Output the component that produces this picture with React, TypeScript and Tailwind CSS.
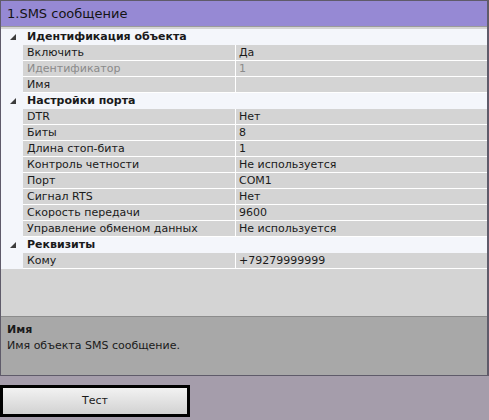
import React from "react";

type Row = { label: string; value: string; disabled?: boolean };
type Section = { title: string; rows: Row[] };

const sections: Section[] = [
  {
    title: "Идентификация объекта",
    rows: [
      { label: "Включить", value: "Да" },
      { label: "Идентификатор", value: "1", disabled: true },
      { label: "Имя", value: "" },
    ],
  },
  {
    title: "Настройки порта",
    rows: [
      { label: "DTR", value: "Нет" },
      { label: "Биты", value: "8" },
      { label: "Длина стоп-бита", value: "1" },
      { label: "Контроль четности", value: "Не используется" },
      { label: "Порт", value: "COM1" },
      { label: "Сигнал RTS", value: "Нет" },
      { label: "Скорость передачи", value: "9600" },
      { label: "Управление обменом данных", value: "Не используется" },
    ],
  },
  {
    title: "Реквизиты",
    rows: [{ label: "Кому", value: "+79279999999" }],
  },
];

function Arrow() {
  return (
    <svg width="7" height="7" viewBox="0 0 7 7" className="block">
      <polygon points="6,0 6,6 0,6" fill="#3c3c3c" />
    </svg>
  );
}

export default function App() {
  return (
    <div
      className="w-[489px] h-[420px] bg-[#a59dab] flex flex-col text-[11px] text-[#1a1a1a]"
      style={{ fontFamily: "Tahoma, 'DejaVu Sans', sans-serif" }}
    >
      <div className="h-[376px] border border-[#5f5b6a] border-r-2 flex flex-col bg-[#d4d4d4]">
        <div className="h-[26px] shrink-0 bg-[#9689d4] flex items-center pl-[6px] pt-[1px] text-[13px] text-[#141414] border-b border-[#9a9a9a]">
          1.SMS сообщение
        </div>
        <div className="flex-1 flex flex-col pt-[2px] bg-[#d4d4d4]">
          {sections.map((s) => (
            <div key={s.title} className="flex flex-col">
              <div className="h-[16px] bg-[#f4f6fb] flex items-center pt-[1px]">
                <div className="w-[22px] flex justify-center pl-[2px]">
                  <Arrow />
                </div>
                <div className="pl-[4px] font-bold">{s.title}</div>
              </div>
              {s.rows.map((r) => (
                <div key={r.label} className="h-[16px] flex bg-[#f4f6fb]">
                  <div className="w-[22px]" />
                  <div
                    className={
                      "w-[212px] bg-[#d4d4d4] border-b border-white flex items-center pl-[4px] pt-[1px] " +
                      (r.disabled ? "text-[#8a8a8a]" : "")
                    }
                  >
                    {r.label}
                  </div>
                  <div className="w-px bg-white" />
                  <div
                    className={
                      "flex-1 bg-[#d4d4d4] border-b border-white flex items-center pl-[3px] pt-[1px] " +
                      (r.disabled ? "text-[#8a8a8a]" : "")
                    }
                  >
                    {r.value}
                  </div>
                </div>
              ))}
            </div>
          ))}
        </div>
        <div className="h-[59px] shrink-0 border-t border-[#8c8c8c] bg-[#a8a8a8] flex flex-col pl-[6px] pt-[5px]">
          <div className="font-bold leading-[16px]">Имя</div>
          <div className="leading-[16px]">Имя объекта SMS сообщение.</div>
        </div>
      </div>
      <div className="pt-[9px]">
        <button className="w-[190px] h-[32px] border-[3px] border-black bg-gradient-to-b from-[#f2f2f2] to-[#d2d2d2] flex items-center justify-center text-[11px] text-[#1a1a1a]">
          Тест
        </button>
      </div>
    </div>
  );
}
